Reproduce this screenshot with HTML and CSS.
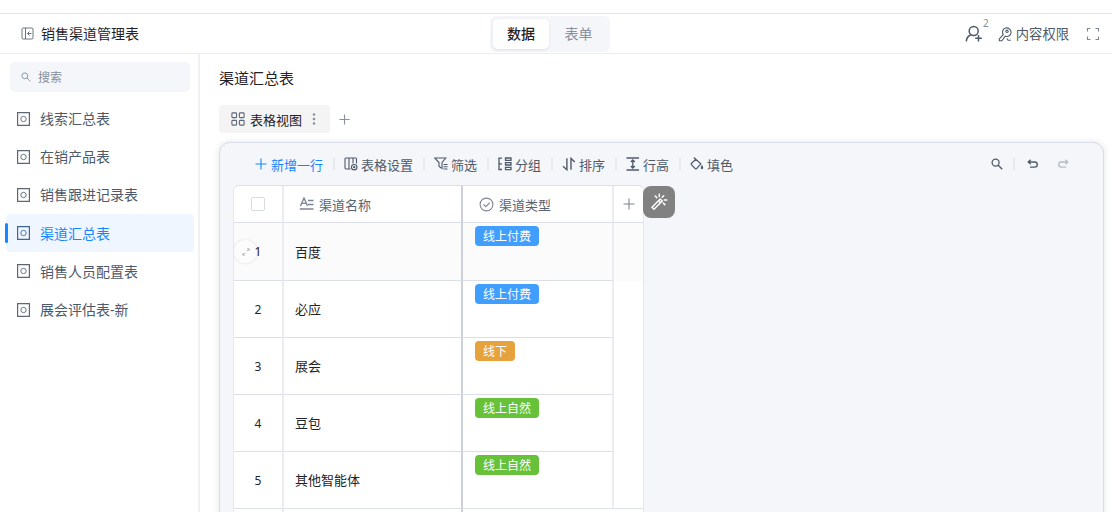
FILE: index.html
```html
<!DOCTYPE html>
<html lang="zh-CN">
<head>
<meta charset="utf-8">
<title>销售渠道管理表</title>
<link rel="stylesheet" href="styles.css">
</head>
<body>
<svg class="defs" width="0" height="0">
  <symbol id="sheet" viewBox="0 0 13 14"><path d="M.6.6h11.800v12.800H.6z" stroke-width="1.200"/><circle cx="6.500" cy="7" r="2.700" stroke-width=".9"/></symbol>
  <symbol id="search" viewBox="0 0 12 12"><circle cx="4.600" cy="4.600" r="3.500"/><path d="M7.200 7.200l4 4"/></symbol>
  <symbol id="plus" viewBox="0 0 14 14"><path d="M7 1.500v11M1.500 7h11"/></symbol>
</svg>
<div class="app">
  <header class="header">
    <div class="brand">
      <svg class="icon" width="13" height="13" viewBox="0 0 13 13"><rect x="1" y="1" width="11" height="11" rx="1.200"/><path d="M4.500 1v11M10.500 6.500H6.500M8.500 4.500l-2 2 2 2"/></svg>
      <span>销售渠道管理表</span>
    </div>
    <nav class="switch"><span class="switch-item current">数据</span><span class="switch-item">表单</span></nav>
    <div class="tools">
      <svg class="icon member" width="18" height="18" viewBox="0 0 18 18"><circle cx="8.700" cy="6" r="4.500"/><path d="M1.300 16.500c.2-3.300 1.700-5.500 4.500-6.500M13.500 10v6.500M10.200 13.200h6.600"/></svg>
      <span class="count">2</span>
      <svg class="icon key" width="14" height="16" viewBox="0 0 14 16"><path d="M5.300 8.700L1.300 13v1.800h2.600l3.300-4.600a4.300 4.300 0 1 0-1.900-1.500z"/><circle cx="9" cy="5.300" r="1.200"/><path d="M8.800 12.500l1.300 1.800h2.700"/></svg>
      <span class="perm">内容权限</span>
      <svg class="icon full" width="14" height="14" viewBox="0 0 14 14"><path d="M1.500 4.500v-3h3M9.500 1.500h3v3M12.500 9.500v3h-3M4.500 12.500h-3v-3"/></svg>
    </div>
  </header>
  <div class="body">
    <aside class="sidebar">
      <div class="search"><svg class="icon" width="10" height="10"><use href="#search"/></svg><span>搜索</span></div>
      <ul class="menu">
        <li><svg class="icon" width="13" height="14"><use href="#sheet"/></svg><span>线索汇总表</span></li>
        <li><svg class="icon" width="13" height="14"><use href="#sheet"/></svg><span>在销产品表</span></li>
        <li><svg class="icon" width="13" height="14"><use href="#sheet"/></svg><span>销售跟进记录表</span></li>
        <li class="active"><svg class="icon" width="13" height="14"><use href="#sheet"/></svg><span>渠道汇总表</span></li>
        <li><svg class="icon" width="13" height="14"><use href="#sheet"/></svg><span>销售人员配置表</span></li>
        <li><svg class="icon" width="13" height="14"><use href="#sheet"/></svg><span>展会评估表-新</span></li>
      </ul>
    </aside>
    <main class="main">
      <h1 class="title">渠道汇总表</h1>
      <div class="views">
        <div class="view">
          <svg class="icon" width="14" height="14" viewBox="0 0 14 14"><rect x=".9" y=".9" width="4.700" height="4.700" rx=".8"/><rect x="8.400" y=".9" width="4.700" height="4.700" rx=".8"/><rect x=".9" y="8.400" width="4.700" height="4.700" rx=".8"/><rect x="8.400" y="8.400" width="4.700" height="4.700" rx=".8"/></svg>
          <span>表格视图</span>
          <svg class="dots" width="4" height="14" viewBox="0 0 4 14"><circle cx="2" cy="2.500" r="1.250"/><circle cx="2" cy="7" r="1.250"/><circle cx="2" cy="11.500" r="1.250"/></svg>
        </div>
        <svg class="icon add-view" width="13" height="13"><use href="#plus"/></svg>
      </div>
      <section class="panel">
        <div class="toolbar">
          <div class="tool primary"><svg class="icon" width="14" height="14"><use href="#plus"/></svg><span>新增一行</span></div>
          <div class="tool"><svg class="icon" width="14" height="14" viewBox="0 0 14 14"><path d="M6.500 12H2a1 1 0 0 1-1-1V2a1 1 0 0 1 1-1h9.500a1 1 0 0 1 1 1v4.500M5 1v11M9 1v5.500"/><circle cx="10.200" cy="10.200" r="2.700"/><circle cx="10.200" cy="10.200" r=".6"/></svg><span>表格设置</span></div>
          <div class="tool"><svg class="icon" width="14" height="14" viewBox="0 0 14 14"><path d="M.8 1h11L8 5.500v6L5 9.500v-4zM9.500 7.500h4M9.500 9.700h4M9.500 12h4"/></svg><span>筛选</span></div>
          <div class="tool"><svg class="icon" width="14" height="14" viewBox="0 0 14 14"><path d="M4 1.200H1v11.300h3M1 6.800h3M7.500 1h5.500v2.300H7.500zM7.500 5.700H13V8H7.500zM7.500 10.400H13v2.300H7.500z" stroke-width="1.300"/></svg><span>分组</span></div>
          <div class="tool"><svg class="icon bold" width="14" height="14" viewBox="0 0 14 14"><path d="M1 9.200l3.900 3.500V1.200M9 12.800V1.400l3.800 3.700"/></svg><span>排序</span></div>
          <div class="tool"><svg class="icon bold" width="14" height="14" viewBox="0 0 14 14"><path d="M.5 1h12.500M.5 13h12.500M6.800 3.200v7.600M4.800 5l2-2 2 2M4.800 9l2 2 2-2" stroke-width="1.300"/></svg><span>行高</span></div>
          <div class="tool"><svg class="icon" width="14" height="14" viewBox="0 0 14 14"><path d="M3.800.5l2 2M1.600 6.300l4.200-3.900 5 4.500-4.200 4.700a1 1 0 0 1-1.400 0L1.600 7.900a1.100 1.100 0 0 1 0-1.600zM12 9c-2 3.500 2 3.500 0 0z" stroke-width="1.250"/></svg><span>填色</span></div>
          <div class="history">
            <svg class="icon" width="12" height="12"><use href="#search"/></svg>
            <i></i>
            <svg class="icon" width="12" height="12" viewBox="0 0 12 12"><path d="M3.700 1.800L1.200 4l2.500 2.200M1.500 4h6.200a2.600 2.600 0 0 1 0 5.200H3"/></svg>
            <svg class="icon redo" width="12" height="12" viewBox="0 0 12 12"><path d="M8.300 1.800L10.800 4 8.300 6.200M10.500 4H4.300a2.600 2.600 0 0 0 0 5.200H9"/></svg>
          </div>
        </div>
        <div class="table-wrap">
          <div class="table">
            <div class="row head">
              <div class="cell num"><span class="check"></span></div>
              <div class="cell name"><svg class="icon" width="16" height="14" viewBox="0 0 16 14"><path d="M1.500 9L5 1l3.500 8M2.700 6.300h4.600M9 3.500h5.500M9 7.500h5.500M.8 12h13.700" stroke-width="1.350"/></svg><span>渠道名称</span></div>
              <div class="cell type"><svg class="icon" width="15" height="15" viewBox="0 0 15 15"><circle cx="7.500" cy="7.500" r="6.400"/><path d="M4.500 7.300l2.300 2.300 4-4"/></svg><span>渠道类型</span></div>
              <div class="cell plus"><svg class="icon" width="14" height="14"><use href="#plus"/></svg></div>
            </div>
            <div class="row hover">
              <div class="cell num"><span class="expand"><svg class="icon" width="8" height="8" viewBox="0 0 8 8"><path d="M4.800 3.200L7 1M5 .8h2.200V3M3.200 4.800L1 7M.8 5v2.200H3"/></svg></span><span class="index">1</span></div><div class="cell name">百度</div><div class="cell type"><span class="tag blue">线上付费</span></div><div class="cell plus"></div>
            </div>
            <div class="row"><div class="cell num">2</div><div class="cell name">必应</div><div class="cell type"><span class="tag blue">线上付费</span></div><div class="cell plus"></div></div>
            <div class="row"><div class="cell num">3</div><div class="cell name">展会</div><div class="cell type"><span class="tag orange">线下</span></div><div class="cell plus"></div></div>
            <div class="row"><div class="cell num">4</div><div class="cell name">豆包</div><div class="cell type"><span class="tag green">线上自然</span></div><div class="cell plus"></div></div>
            <div class="row last"><div class="cell num">5</div><div class="cell name">其他智能体</div><div class="cell type"><span class="tag green">线上自然</span></div><div class="cell plus"></div></div>
            <div class="row foot"><div class="cell num"></div><div class="cell name"></div><div class="cell type"></div><div class="cell plus"></div></div>
          </div>
          <div class="magic"><svg class="icon" width="18" height="18" viewBox="0 0 18 18"><path d="M2 14.200L10.200 6l2 2L4 16.200zM8.500 7.700l2 2M9.300 1.200v2.300M5.200 3l1.600 1.600M13.700 2.700l-1.500 1.600M14.300 6.900h2.500M13.200 10l1.600 1.600"/></svg></div>
        </div>
      </section>
    </main>
  </div>
</div>
</body>
</html>
```

FILE: styles.css
```css
* { box-sizing: border-box; }
body {
  margin: 0;
  background: #fff;
  color: #1f2329;
  font: 13px/20px "Noto Sans", "Noto Sans CJK SC", sans-serif;
}
.defs { position: absolute; }
.app { height: 512px; padding-top: 13px; display: flex; flex-direction: column; overflow: hidden; }
.icon { display: block; flex: none; fill: none; stroke: currentColor; stroke-width: 1.1; }
.icon.bold { stroke-width: 1.4; }

.header {
  height: 41px;
  flex: none;
  display: grid;
  grid-template-columns: 490px 120px 1fr;
  align-items: center;
  border-top: 1px solid #e3e4e6;
  border-bottom: 1px solid #ebedf0;
}
.brand { display: flex; align-items: center; gap: 7px; padding-left: 21px; font-size: 14px; }
.brand span { padding-top: 1px; }
.brand .icon { color: #6b7380; stroke-width: 1; }
.switch { display: flex; height: 36px; padding: 3px; background: #f5f6fa; border-radius: 6px; }
.switch-item { flex: 1; padding-left: 1px; font-size: 14px; line-height: 30px; text-align: center; color: #8a919e; }
.switch-item.current { flex: none; width: 56px; padding-left: 0; color: #1f2329; font-weight: 500; background: #fff; border-radius: 5px; box-shadow: 0 1px 3px rgba(31, 35, 41, .1); }
.tools { display: flex; align-items: center; justify-content: flex-end; padding-right: 12px; color: #4e5969; }
.member { stroke-width: 1.5; }
.count { font-size: 10px; line-height: 12px; color: #86909c; margin: 0 9px 22px 0; }
.perm { margin: 0 17px 0 4px; padding-top: 1px; font-size: 13.3px; }
.full { color: #7c8594; }

.body { flex: 1; display: flex; min-height: 0; }
.sidebar { width: 200px; flex: none; padding-top: 8px; border-right: 2px solid #f0f1f4; }
.search {
  display: flex;
  align-items: center;
  gap: 7px;
  width: 180px;
  height: 30px;
  margin-left: 10px;
  padding-left: 11px;
  border-radius: 5px;
  background: #f5f6fa;
  color: #86909c;
  font-size: 12px;
}
.search span { padding-top: 1px; }
.menu { list-style: none; margin: 7.600px 0 0; padding: 0 4px 0 6px; }
.menu li { position: relative; display: flex; align-items: center; gap: 10px; height: 38px; margin-bottom: .2px; padding-left: 11px; border-radius: 4px; font-size: 14px; color: #4e5969; }
.menu span { padding-top: 1px; }
.menu .icon { color: #5d6776; }
.menu .active { background: #eff6ff; color: #1586ff; }
.menu .active .icon { color: #3f6694; }
.menu .active::before { content: ""; position: absolute; left: -1px; top: 9px; width: 3px; height: 20px; border-radius: 2px; background: #1586ff; }

.main { flex: 1; padding: 13px 8px 0 19px; display: flex; flex-direction: column; }
.title { margin: 0; font-size: 15px; line-height: 23px; font-weight: 400; }
.views { display: flex; align-items: center; gap: 8px; margin-top: 15px; }
.view { display: flex; align-items: center; gap: 5px; width: 111px; height: 28px; padding-left: 12px; background: #f4f4f4; border-radius: 4px; }
.view span { padding-top: 1px; }
.view .icon { color: #5d6776; }
.dots { fill: #86909c; margin-left: 5px; }
.add-view { color: #86909c; stroke-width: 1.2; }

.panel {
  flex: none;
  height: 420px;
  margin-top: 9px;
  padding-left: 13px;
  background: #f5f6fa;
  border: 1px solid #d9dce7;
  border-radius: 11px;
  box-shadow: 0 0 6px rgba(31, 35, 41, .13);
}
.toolbar { display: flex; align-items: center; height: 42px; padding-left: 21px; color: #4e5969; }
.tool { display: flex; align-items: center; gap: 3px; line-height: 20px; }
.tool span { padding-top: 1px; }
.tool + .tool::before { content: ""; width: 2px; height: 12px; margin: 0 6px 0 10px; background: #e8eaee; }
.primary { color: #1586ff; }
.history { display: flex; align-items: center; margin-left: auto; padding-right: 34px; }
.history .icon { stroke-width: 1.3; }
.history i { width: 2px; height: 12px; margin: 0 12px 0 10px; background: #e8eaee; }
.history .redo { margin-left: 18px; color: #b7bdc7; }

.table-wrap { display: flex; align-items: flex-start; }
.table { width: 411px; border: 1px solid #dcdfe8; border-left-color: #e6e8ef; border-right-color: #e6e8ef; border-radius: 6px 6px 0 0; background: #fff; overflow: hidden; }
.row { display: grid; grid-template-columns: 50px 179px 151px 29px; height: 57px; }
.head { height: 37px; color: #5a6372; }
.head span { padding-top: 1px; }
.hover { height: 58px; background: #fbfbfb; }
.cell { display: flex; align-items: center; border-bottom: 1px solid #dcdfe8; }
.row:not(.head):not(.last) .plus { border-bottom: 0; }
.num { position: relative; justify-content: center; border-right: 2px solid #ebecf2; font-size: 12px; padding-top: 1px; }
.head .num { padding-top: 0; }
.name { padding-left: 11px; border-right: 2px solid #cdd0d9; }
.type { padding-left: 12px; border-right: 2px solid #ebecf2; }
.row:not(.head) .type { align-items: flex-start; padding-top: 3px; }
.foot .type { border-right-color: transparent; }
.head .name { padding-left: 15px; gap: 4px; }
.head .type { padding-left: 16px; gap: 5px; }
.head .icon { color: #7c8594; }
.plus { justify-content: center; }
.check { width: 14px; height: 14px; border: 1px solid #d9dce3; border-radius: 2px; background: #fff; }
.expand { position: absolute; left: 0; top: 17px; width: 23px; height: 23px; border-radius: 50%; display: grid; place-items: center; background: #fcfcfc; color: #aaa; box-shadow: 0 0 3px rgba(0, 0, 0, .13); }
.expand .icon { stroke-width: .8; }
.index { position: relative; }
.tag { height: 20px; padding: 0 8px; line-height: 21px; font-size: 12px; color: #fff; border-radius: 4px; }
.blue { background: #409eff; }
.orange { background: #e6a23c; }
.green { background: #67c23a; }
.magic { width: 32px; height: 32px; margin-top: 1px; margin-left: -1px; border-radius: 8px; background: #818181; color: #fff; display: grid; place-items: center; z-index: 1; }
.magic .icon { stroke-width: 1.5; stroke-linecap: round; }
```
